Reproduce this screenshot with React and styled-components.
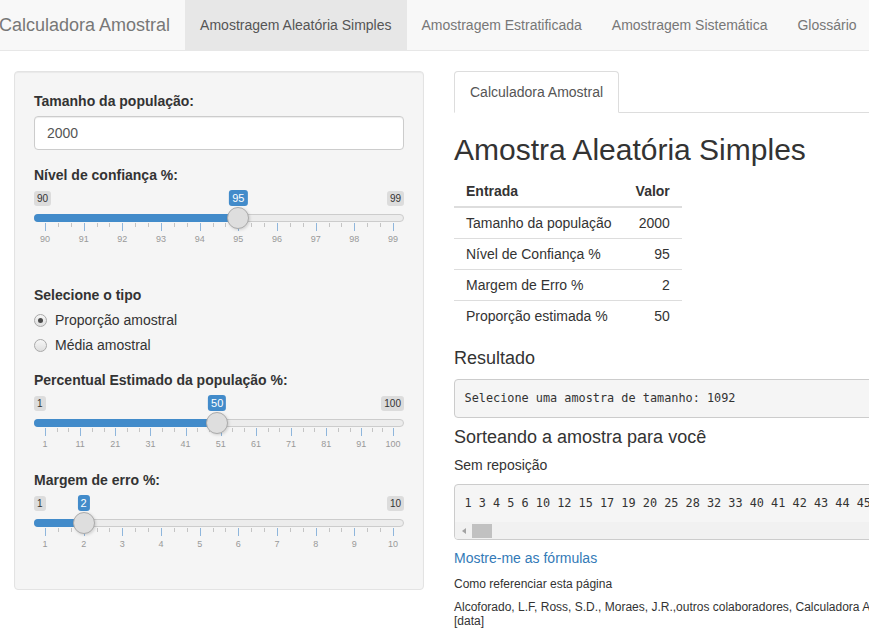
import React from 'react';
import styled, { createGlobalStyle } from 'styled-components';

const Global = createGlobalStyle`
  html, body { margin: 0; padding: 0; overflow: hidden; background: #fff; }
  body {
    font-family: "Liberation Sans", Arial, Helvetica, sans-serif;
    font-size: 14px;
    line-height: 1.42857;
    color: #333;
  }
  * { box-sizing: border-box; }
`;

const Page = styled.div`
  width: 1320px;
`;

const NavBar = styled.nav`
  display: flex;
  align-items: stretch;
  height: 51px;
  background: #f8f8f8;
  border-bottom: 1px solid #e7e7e7;
  margin-bottom: 20px;
`;

const Brand = styled.div`
  font-size: 18px;
  line-height: 20px;
  color: #777;
  padding: 15px 15px 15px 0;
  margin-left: -1px;
`;

const NavItem = styled.a`
  display: block;
  padding: 15px;
  line-height: 20px;
  font-size: 14px;
  color: ${(p) => (p.$active ? '#555' : '#777')};
  background: ${(p) => (p.$active ? '#e7e7e7' : 'transparent')};
  text-decoration: none;
`;

const Row = styled.div`
  display: flex;
  align-items: flex-start;
`;

const SideCol = styled.div`
  width: 439px;
  flex: none;
  padding: 0 15px 0 14px;
`;

const MainCol = styled.div`
  width: 880px;
  flex: none;
  padding: 0 15px;
`;

const Well = styled.div`
  background: #f5f5f5;
  border: 1px solid #e3e3e3;
  border-radius: 4px;
  box-shadow: inset 0 1px 1px rgba(0, 0, 0, 0.05);
  padding: 19px;
`;

const FormGroup = styled.div`
  margin-bottom: ${(p) => p.$mb || 15}px;
`;

const Label = styled.div`
  font-weight: 700;
  font-size: 14px;
  line-height: 20px;
  margin-bottom: 5px;
`;

const TextInput = styled.div`
  height: 34px;
  padding: 6px 12px;
  font-size: 14px;
  line-height: 20px;
  color: #555;
  background: #fff;
  border: 1px solid #ccc;
  border-radius: 4px;
  box-shadow: inset 0 1px 1px rgba(0, 0, 0, 0.075);
`;

/* ---------- slider ---------- */
const Irs = styled.div`
  position: relative;
  height: 60px;
  width: 370px;
`;

const MinMax = styled.span`
  position: absolute;
  top: 1px;
  ${(p) => (p.$right ? 'right: 0;' : 'left: 0;')}
  font-size: 10px;
  line-height: 13px;
  padding: 1px 3px;
  color: #333;
  background: rgba(0, 0, 0, 0.1);
  border-radius: 3px;
`;

const Single = styled.span`
  position: absolute;
  top: 0;
  transform: translateX(-50%);
  font-size: 11px;
  line-height: 14px;
  padding: 1px 3px;
  color: #fff;
  background: #428bca;
  border-radius: 3px;
`;

const Line = styled.div`
  position: absolute;
  top: 24px;
  left: 0;
  right: 0;
  height: 8px;
  background: #ececec;
  border: 1px solid #ccc;
  border-radius: 8px;
`;

const Bar = styled.div`
  position: absolute;
  top: 24px;
  left: 0;
  height: 8px;
  background: #428bca;
  border-radius: 8px 0 0 8px;
`;

const Handle = styled.div`
  position: absolute;
  top: 17px;
  width: 22px;
  height: 22px;
  margin-left: -11px;
  border: 1px solid #ababab;
  background: #dedede;
  border-radius: 50%;
  box-shadow: 1px 1px 3px rgba(0, 0, 0, 0.15);
`;

const Tick = styled.span`
  position: absolute;
  top: 33px;
  width: 1px;
  height: ${(p) => (p.$small ? 4 : 8)}px;
  background: ${(p) => (p.$small ? '#c4c4c4' : '#8fb6dc')};
`;

const TickText = styled.span`
  position: absolute;
  top: 43px;
  transform: translateX(-50%);
  font-size: 9px;
  line-height: 12px;
  color: #999;
  white-space: nowrap;
`;

function Slider({ min, max, value, labels }) {
  const pad = 11;
  const span = 370 - pad * 2;
  const pos = (v) => pad + ((v - min) / (max - min)) * span;
  const hx = pos(value);
  const minors = [];
  for (let i = 0; i < labels.length - 1; i++) {
    const a = pos(labels[i]);
    const b = pos(labels[i + 1]);
    minors.push(a + (b - a) / 3, a + ((b - a) * 2) / 3);
  }
  return (
    <Irs>
      <Line />
      <Bar style={{ width: hx }} />
      <MinMax>{min}</MinMax>
      <MinMax $right>{max}</MinMax>
      {labels.map((l) => (
        <React.Fragment key={l}>
          <Tick style={{ left: Math.round(pos(l)) }} />
          <TickText style={{ left: pos(l) }}>{l}</TickText>
        </React.Fragment>
      ))}
      {minors.map((m, i) => (
        <Tick key={i} $small style={{ left: Math.round(m) }} />
      ))}
      <Single style={{ left: hx }}>{value}</Single>
      <Handle style={{ left: hx }} />
    </Irs>
  );
}

/* ---------- radios ---------- */
const RadioRow = styled.label`
  display: flex;
  align-items: center;
  gap: 8px;
  height: 20px;
  font-size: 14px;
  line-height: 20px;
  margin-bottom: 5px;
`;

const RadioDot = styled.span`
  width: 13px;
  height: 13px;
  flex: none;
  border-radius: 50%;
  border: 1px solid #a9a9a9;
  background: linear-gradient(#f6f6f6, #dedede);
  display: inline-flex;
  align-items: center;
  justify-content: center;
  &::after {
    content: '';
    width: 5px;
    height: 5px;
    border-radius: 50%;
    background: ${(p) => (p.$checked ? '#4a4a4a' : 'transparent')};
  }
`;

/* ---------- main ---------- */
const Tabs = styled.div`
  display: flex;
  border-bottom: 1px solid #ddd;
`;

const Tab = styled.div`
  padding: 10px 15px;
  line-height: 20px;
  font-size: 14px;
  color: #555;
  background: #fff;
  border: 1px solid #ddd;
  border-bottom-color: transparent;
  border-radius: 4px 4px 0 0;
  margin-bottom: -1px;
`;

const Title = styled.h2`
  font-size: 30px;
  font-weight: 500;
  line-height: 33px;
  margin: 20px 0 10px;
`;

const Table = styled.table`
  border-collapse: collapse;
  margin-bottom: 18px;
  font-size: 14px;
  th, td {
    padding: 5px 12px;
    line-height: 20px;
    text-align: left;
  }
  th { font-weight: 700; border-bottom: 2px solid #ddd; }
  td { border-top: 1px solid #ddd; }
  tbody tr:first-child td { border-top: 0; }
  th:last-child, td:last-child { text-align: right; }
`;

const H4 = styled.h4`
  font-size: 18px;
  font-weight: 500;
  line-height: 19.8px;
  margin: 10px 0;
`;

const H5 = styled.h5`
  font-size: 14px;
  font-weight: 500;
  line-height: 15.4px;
  margin: 10px 0;
`;

const H6 = styled.h6`
  font-size: 12px;
  font-weight: 500;
  line-height: 13.2px;
  margin: 10px 0;
`;

const Pre = styled.div`
  margin: 0 0 10px;
  background: #f5f5f5;
  border: 1px solid #ccc;
  border-radius: 4px;
  overflow: hidden;
`;

const Code = styled.div`
  padding: 9.5px;
  font-family: "DejaVu Sans Mono", "Liberation Mono", monospace;
  font-size: 11.85px;
  line-height: 18.57px;
  color: #333;
  white-space: nowrap;
`;

const Scrollbar = styled.div`
  display: flex;
  align-items: center;
  height: 17px;
  background: #f1f1f1;
`;

const ScrollArrow = styled.span`
  width: 17px;
  display: flex;
  justify-content: center;
  &::before {
    content: '';
    border-style: solid;
    border-width: 3.5px 4px 3.5px 0;
    border-color: transparent #a3a3a3 transparent transparent;
  }
`;

const ScrollThumb = styled.span`
  width: 20px;
  height: 14px;
  background: #c1c1c1;
`;

const Link = styled.a`
  display: block;
  color: #337ab7;
  text-decoration: none;
  font-size: 14px;
  line-height: 20px;
  margin-top: -2px;
`;

const nums =
  '1 3 4 5 6 10 12 15 17 19 20 25 28 32 33 40 41 42 43 44 45 47 48 50 51 53 55 56 58 60 62 63 64 66 67 69 71 72 75 77 78 80 81 83 84 86 88 89 90 91 93 95 96 98 99 100 102 104 105 107 108';

const range = (a, b, s) => {
  const r = [];
  for (let v = a; v <= b; v += s) r.push(v);
  return r;
};

export default function App() {
  return (
    <Page>
      <Global />
      <NavBar>
        <Brand>Calculadora Amostral</Brand>
        <NavItem $active>Amostragem Aleatória Simples</NavItem>
        <NavItem>Amostragem Estratificada</NavItem>
        <NavItem>Amostragem Sistemática</NavItem>
        <NavItem>Glossário</NavItem>
      </NavBar>
      <Row>
        <SideCol>
          <Well>
            <FormGroup>
              <Label>Tamanho da população:</Label>
              <TextInput>2000</TextInput>
            </FormGroup>
            <FormGroup $mb={35}>
              <Label>Nível de confiança %:</Label>
              <Slider min={90} max={99} value={95} labels={range(90, 99, 1)} />
            </FormGroup>
            <FormGroup>
              <Label>Selecione o tipo</Label>
              <RadioRow>
                <RadioDot $checked />
                Proporção amostral
              </RadioRow>
              <RadioRow>
                <RadioDot />
                Média amostral
              </RadioRow>
            </FormGroup>
            <FormGroup>
              <Label>Percentual Estimado da população %:</Label>
              <Slider
                min={1}
                max={100}
                value={50}
                labels={[1, 11, 21, 31, 41, 51, 61, 71, 81, 91, 100]}
              />
            </FormGroup>
            <FormGroup>
              <Label>Margem de erro %:</Label>
              <Slider min={1} max={10} value={2} labels={range(1, 10, 1)} />
            </FormGroup>
          </Well>
        </SideCol>
        <MainCol>
          <Tabs>
            <Tab>Calculadora Amostral</Tab>
          </Tabs>
          <Title>Amostra Aleatória Simples</Title>
          <Table>
            <thead>
              <tr>
                <th>Entrada</th>
                <th>Valor</th>
              </tr>
            </thead>
            <tbody>
              <tr><td>Tamanho da população</td><td>2000</td></tr>
              <tr><td>Nível de Confiança %</td><td>95</td></tr>
              <tr><td>Margem de Erro %</td><td>2</td></tr>
              <tr><td>Proporção estimada %</td><td>50</td></tr>
            </tbody>
          </Table>
          <H4>Resultado</H4>
          <Pre>
            <Code>Selecione uma amostra de tamanho: 1092</Code>
          </Pre>
          <H4>Sorteando a amostra para você</H4>
          <H5>Sem reposição</H5>
          <Pre>
            <Code>{nums}</Code>
            <Scrollbar>
              <ScrollArrow />
              <ScrollThumb />
            </Scrollbar>
          </Pre>
          <Link>Mostre-me as fórmulas</Link>
          <H6>Como referenciar esta página</H6>
          <H6>
            Alcoforado, L.F, Ross, S.D., Moraes, J.R.,outros colaboradores, Calculadora Amostral. Disponível em: http://www.calculadoraamostral.com.br
            <br />
            [data]
          </H6>
        </MainCol>
      </Row>
    </Page>
  );
}
